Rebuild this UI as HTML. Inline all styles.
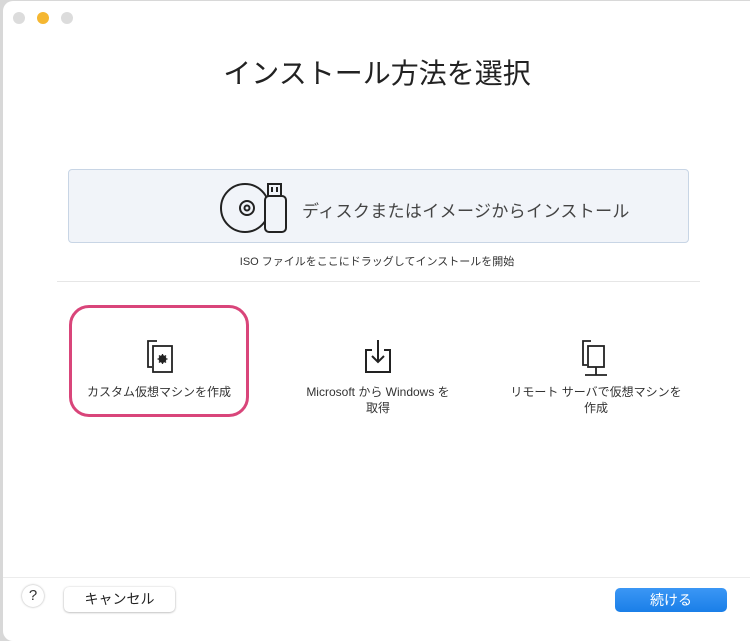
<!DOCTYPE html><html><head><meta charset="utf-8"><style>
body{margin:0;width:750px;height:626px;background:#d8d8d8;font-family:"Liberation Sans","Noto Sans CJK JP",sans-serif;overflow:hidden;position:relative}
.win{position:absolute;left:3px;top:1px;width:760px;height:640px;background:#fff;border-radius:10px}
.a{position:absolute}
.dot{position:absolute;top:12px;width:12px;height:12px;border-radius:50%;background:#dcdcdc}
.lbl{position:absolute;font-size:12px;color:#333;text-align:center;line-height:16px}
</style></head><body>
<div class="win"></div>
<div class="dot" style="left:13px"></div><div class="dot" style="left:37px;background:#f5b731"></div><div class="dot" style="left:61px"></div>
<div class="a" style="left:0;width:754px;top:52px;text-align:center;font-size:28px;color:#222">インストール方法を選択</div>
<div class="a" style="left:68px;top:169px;width:619px;height:72px;background:#f1f4f9;border:1px solid #c8d5e5;border-radius:4px"></div>
<svg class="a" style="left:218px;top:178px" width="72" height="58" viewBox="0 0 72 58" fill="none" stroke="#222" stroke-width="2">
<circle cx="27" cy="30" r="24"/><circle cx="29" cy="30" r="7"/><circle cx="29" cy="30" r="2.5"/>
<rect x="47" y="18" width="21" height="36" rx="4" fill="#f1f4f9"/><rect x="50" y="6" width="13" height="12" fill="#f1f4f9"/><path d="M54 9v5M59 9v5"/></svg>
<div class="a" style="left:302px;top:197px;font-size:17px;letter-spacing:0.35px;color:#444">ディスクまたはイメージからインストール</div>
<div class="a" style="left:0;width:754px;top:253px;text-align:center;font-size:11px;color:#333">ISO ファイルをここにドラッグしてインストールを開始</div>
<div class="a" style="left:57px;top:281px;width:643px;height:1px;background:#e6e6e6"></div>
<div class="a" style="left:69px;top:305px;width:174px;height:106px;border:3px solid #d9457a;border-radius:20px"></div>
<svg class="a" style="left:145px;top:338px" width="32" height="36" viewBox="0 0 32 36" fill="none" stroke="#222" stroke-width="1.8">
<path d="M12 3H3v26h4"/><rect x="8" y="8" width="19" height="26"/><circle cx="17.5" cy="21" r="3" fill="#222"/><path d="M17.5 16v10M12.5 21h10M14 17.5l7 7M21 17.5l-7 7" stroke-width="1.3"/></svg>
<svg class="a" style="left:362px;top:338px" width="32" height="36" viewBox="0 0 32 36" fill="none" stroke="#222" stroke-width="2">
<path d="M10 12H4v22h24V12h-6"/><path d="M16 2v22M10 18l6 6 6-6"/></svg>
<svg class="a" style="left:580px;top:338px" width="32" height="40" viewBox="0 0 32 40" fill="none" stroke="#222" stroke-width="1.8">
<path d="M11 3H3v24h4"/><rect x="8" y="8" width="16" height="21"/><path d="M16 29v8M5 37h22"/></svg>
<div class="lbl" style="left:69px;width:180px;top:384px">カスタム仮想マシンを作成</div>
<div class="lbl" style="left:280px;width:196px;top:384px">Microsoft から Windows を<br>取得</div>
<div class="lbl" style="left:496px;width:200px;top:384px">リモート サーバで仮想マシンを<br>作成</div>
<div class="a" style="left:3px;top:577px;width:750px;height:1px;background:#ececec"></div>
<div class="a" style="left:22px;top:585px;width:22px;height:22px;border-radius:50%;background:#fff;box-shadow:0 0 2px rgba(0,0,0,.35);text-align:center;font-size:15px;line-height:22px;color:#333">?</div>
<div class="a" style="left:64px;top:587px;width:111px;height:25px;border-radius:5px;background:#fff;box-shadow:0 0.5px 2px rgba(0,0,0,.35);text-align:center;font-size:14px;line-height:25px;color:#222">キャンセル</div>
<div class="a" style="left:615px;top:588px;width:112px;height:24px;border-radius:5px;background:linear-gradient(#3b97f5,#1a7fe8);text-align:center;font-size:14px;line-height:24px;color:#fff">続ける</div>
</body></html>
